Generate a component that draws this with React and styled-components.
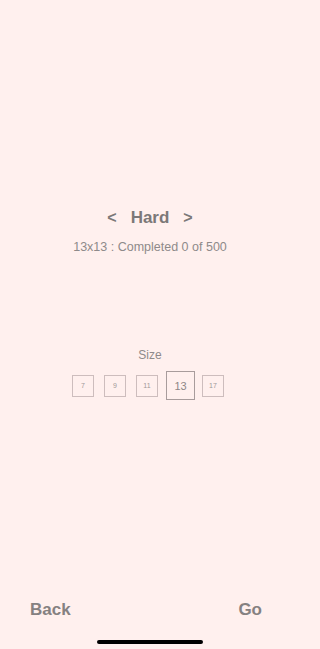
import React from "react";
import styled, { createGlobalStyle } from "styled-components";

const Global = createGlobalStyle`
  html, body { margin: 0; padding: 0; background: #fff0ee; }
  body { font-family: "Liberation Sans", Arial, sans-serif; }
`;

const Page = styled.div`
  height: 649px;
  width: 300px;
  display: flex;
  flex-direction: column;
  align-items: center;
  background: #fff0ee;
  box-sizing: border-box;
  padding-bottom: 5px;
`;

const Header = styled.div`
  margin-top: 208px;
  display: flex;
  flex-direction: column;
  align-items: center;
`;

const TitleRow = styled.div`
  display: flex;
  align-items: center;
  height: 20px;
  font-size: 17px;
  font-weight: bold;
  color: #7c7878;
  line-height: 20px;
`;

const Arrow = styled.span`
  font-size: 16px;
  font-weight: bold;
  margin: ${(p) => (p.$side === "left" ? "0 14px 0 0" : "0 0 0 14px")};
`;

const Subtitle = styled.div`
  margin-top: 11px;
  font-size: 12.5px;
  line-height: 16px;
  color: #8e8a8a;
`;

const SizeSection = styled.div`
  margin-top: 92px;
  display: flex;
  flex-direction: column;
  align-items: center;
`;

const SizeLabel = styled.div`
  font-size: 12px;
  line-height: 16px;
  color: #8e8a8a;
`;

const BoxRow = styled.div`
  margin-top: 8px;
  display: flex;
  align-items: center;
  gap: 10px;
  padding-right: 4px;
`;

const Box = styled.div`
  box-sizing: border-box;
  width: ${(p) => (p.$active ? "29px" : "22px")};
  height: ${(p) => (p.$active ? "29px" : "22px")};
  margin: ${(p) => (p.$active ? "0 -3px 0 -2px" : "0")};
  border: 1px solid ${(p) => (p.$active ? "#a89c9c" : "#cdbdbd")};
  display: flex;
  align-items: center;
  justify-content: center;
  font-size: ${(p) => (p.$active ? "11px" : "7px")};
  color: ${(p) => (p.$active ? "#8e8686" : "#a09898")};
`;

const Footer = styled.div`
  margin-top: auto;
  width: 100%;
  box-sizing: border-box;
  display: flex;
  justify-content: space-between;
  padding: 0 38px 0 30px;
`;

const FooterButton = styled.div`
  font-size: 17px;
  font-weight: bold;
  line-height: 20px;
  color: #858181;
`;

const HomeIndicator = styled.div`
  margin-top: 20px;
  width: 106px;
  height: 4px;
  border-radius: 2px;
  background: #000;
  flex-shrink: 0;
`;

const sizes = [7, 9, 11, 13, 17];

export default function App() {
  return (
    <>
      <Global />
      <Page>
        <Header>
          <TitleRow>
            <Arrow $side="left">&lt;</Arrow>
            Hard
            <Arrow $side="right">&gt;</Arrow>
          </TitleRow>
          <Subtitle>13x13 : Completed 0 of 500</Subtitle>
        </Header>
        <SizeSection>
          <SizeLabel>Size</SizeLabel>
          <BoxRow>
            {sizes.map((s) => (
              <Box key={s} $active={s === 13}>
                {s}
              </Box>
            ))}
          </BoxRow>
        </SizeSection>
        <Footer>
          <FooterButton>Back</FooterButton>
          <FooterButton>Go</FooterButton>
        </Footer>
        <HomeIndicator />
      </Page>
    </>
  );
}
